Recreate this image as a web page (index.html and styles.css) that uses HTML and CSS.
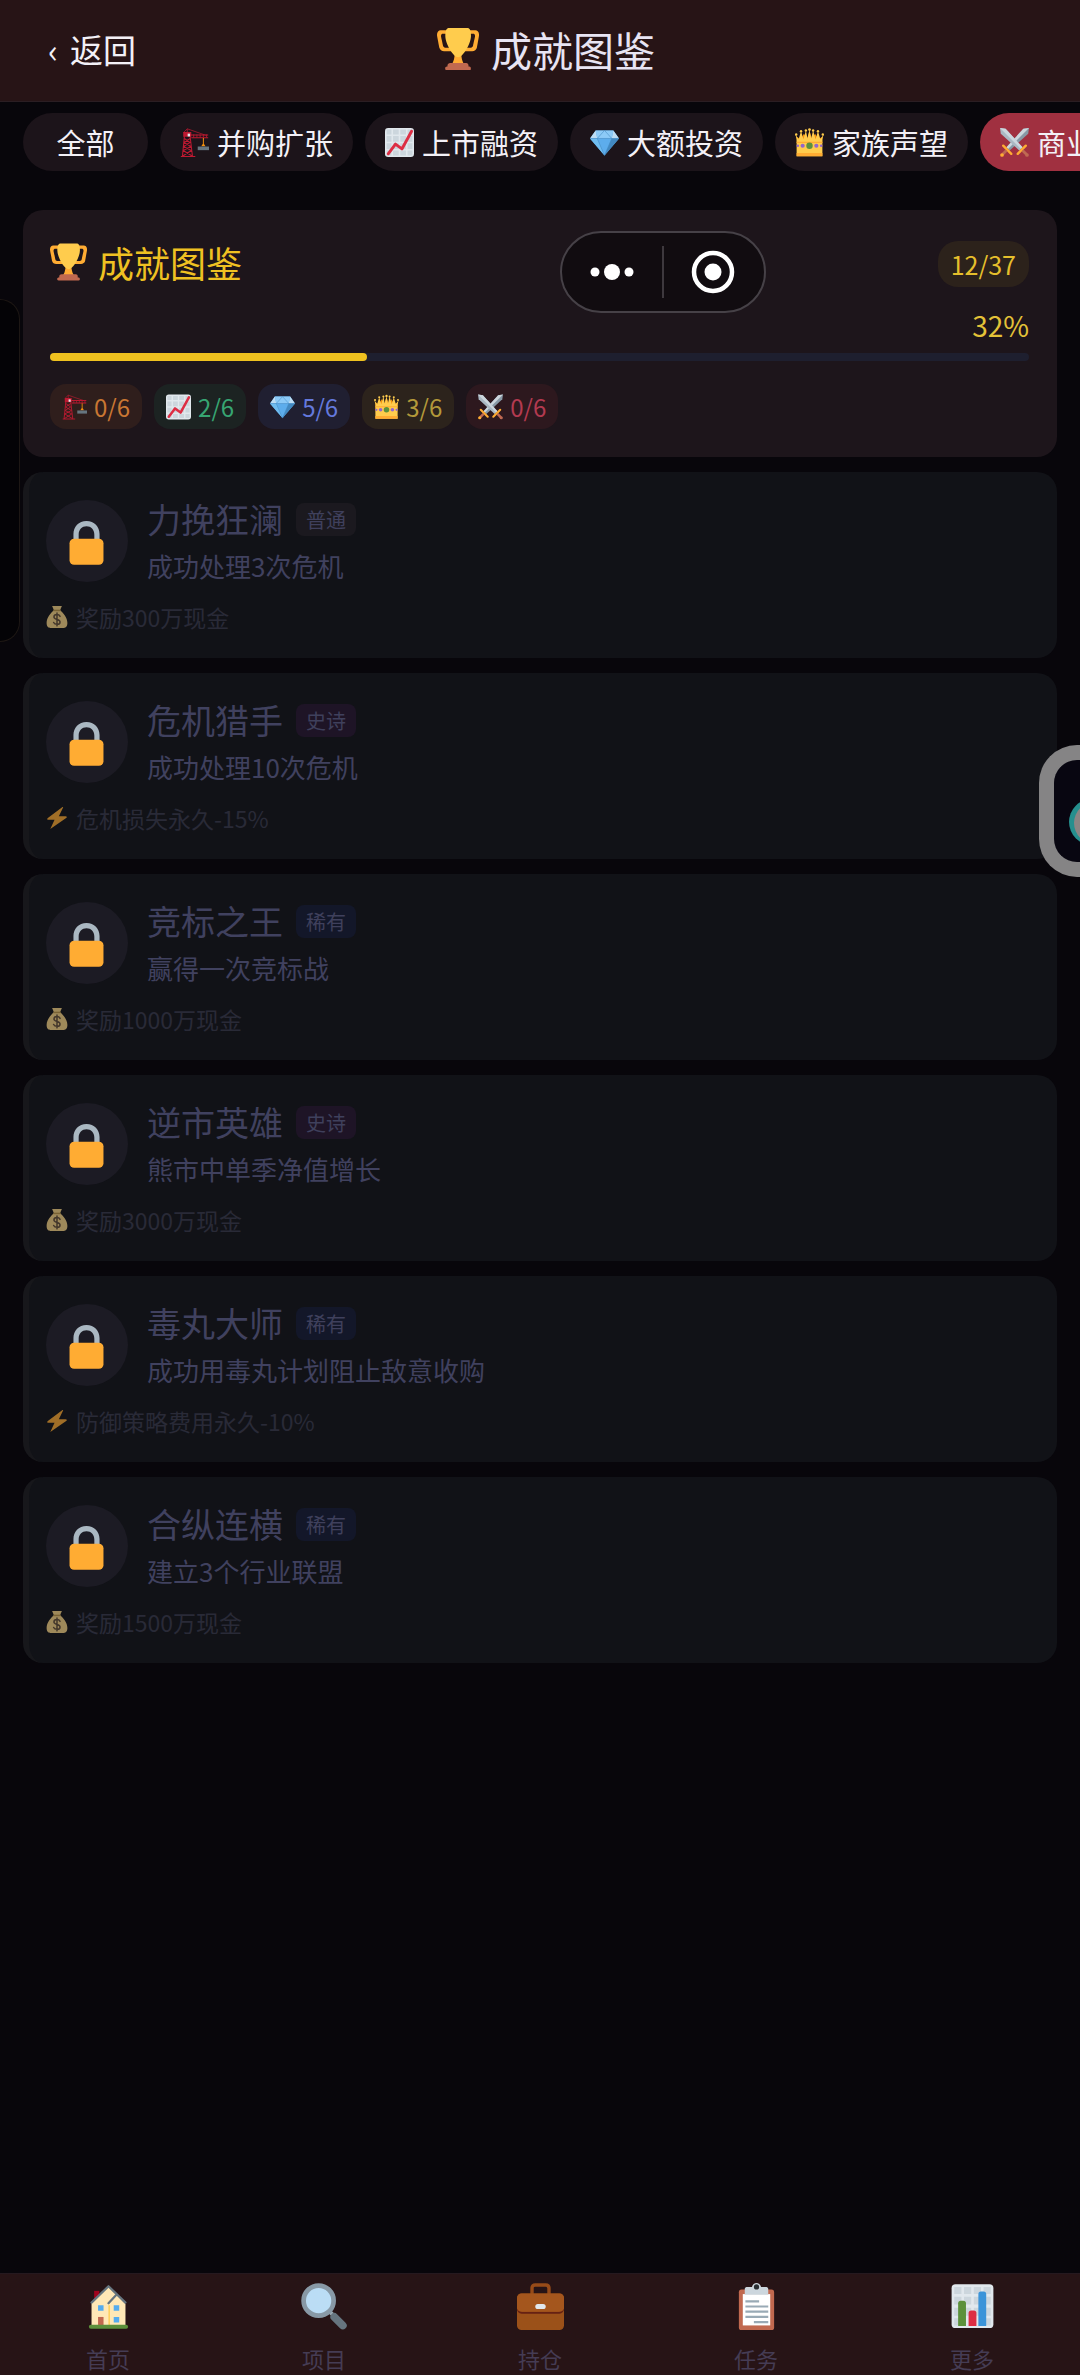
FILE: index.html
```html
<!DOCTYPE html>
<html lang="zh-CN">
<head>
<meta charset="utf-8">
<meta name="viewport" content="width=device-width, initial-scale=1">
<title>成就图鉴</title>
<link rel="stylesheet" href="styles.css">
</head>
<body>
<svg class="sprite" aria-hidden="true">
  <symbol id="trophy" viewBox="0 0 36 36">
    <path fill="#FFAC33" d="M5.123 5h6C12.227 5 13 4.896 13 6V4c0-1.104-.773-2-1.877-2h-8c-2 0-3.583 2.125-3 5 0 0 1.791 9.375 1.917 9.958C2.373 18.5 4.164 20 6.081 20h6.958c1.105 0-.039-1.896-.039-3v-2c0 1.104-.773 2-1.877 2h-4c-1.104 0-1.833-1.042-2-2S3.539 7.667 3.539 7.667C3.206 5.75 4.018 5 5.123 5zm25.812 0h-6C23.831 5 22 4.896 22 6V4c0-1.104 1.831-2 2.935-2h8c2 0 3.584 2.125 3 5 0 0-1.633 9.419-1.771 10-.354 1.5-2.042 3-4 3h-7.146C21.914 20 22 18.104 22 17v-2c0 1.104 1.831 2 2.935 2h4c1.104 0 1.834-1.042 2-2s1.584-7.333 1.584-7.333C32.851 5.75 32.04 5 30.935 5zM20.832 22c0-6.958-2.709 0-2.709 0s-3-6.958-3 0-3.291 10-3.291 10h12.292s-3.292-3.042-3.292-10z"/>
    <path fill="#FFCC4D" d="M29.123 6.577c0 6.775-6.77 18.423-11 18.423s-11-11.649-11-18.423C7.123.875 9.054 0 10.123 0h16c1.25 0 3 .875 3 6.577z"/>
    <path fill="#C1694F" d="M27 33c0 1.104.227 2-.877 2h-16C9.018 35 9 34.104 9 33v-1c0-1.104 1.164-2 2.206-2h13.917c1.042 0 1.877.896 1.877 2zM29 34.625c0 .76.165 1.375-1.252 1.375H8.498C7.206 36 7 35.385 7 34.625v-.25C7 33.615 7.738 33 8.498 33h19.25c.759 0 1.252.615 1.252 1.375z"/>
  </symbol>
  <symbol id="crane" viewBox="0 0 36 36">
    <path fill="none" stroke="#BE1931" stroke-width="1.3" d="M5.500 10L3 35M12.500 10l3 25M5.500 13l7 5-8 5 9.500 5-11 7M12.500 13l-7.500 5 8.500 5-9.500 5 11.500 7M1 35.300h18"/>
    <path fill="none" stroke="#BE1931" stroke-width=".9" d="M4 6l5-5 23 8M9 1v5"/>
    <path fill="#BE1931" d="M4 5h10v6H4zM14 8h21v1.200H14zM14 11.500h21v1.300H14z"/>
    <path stroke="#BE1931" stroke-width="1" d="M17 8v4M21 8v4M25 8v4M29 8v4M33 8v4"/>
    <path fill="#E1E8ED" d="M9.500 7h3v3.500h-3z"/>
    <path fill="#F4900C" d="M28.400 12.500h1.200v7l2 3h-5.200l2-3z"/>
    <path fill="#66757F" d="M22 23h14v4.500H22z"/>
  </symbol>
  <symbol id="rising" viewBox="0 0 36 36">
    <rect width="36" height="36" rx="4" fill="#E1E8ED"/>
    <path fill="#CCD6DD" d="M2 2h6v6H2zM10 2h7v6h-7zM19 2h7v6h-7zM28 2h6v6h-6zM2 10h6v7H2zM10 10h7v7h-7zM19 10h7v7h-7zM28 10h6v7h-6zM2 19h6v7H2zM10 19h7v7h-7zM19 19h7v7h-7zM28 19h6v7h-6zM2 28h6v6H2zM10 28h7v6h-7zM19 28h7v6h-7zM28 28h6v6h-6z"/>
    <path fill="none" stroke="#DD2E44" stroke-width="3.600" stroke-linecap="round" stroke-linejoin="round" d="M4 32l9-12 8 6L33 4"/>
  </symbol>
  <symbol id="gem" viewBox="0 0 36 36">
    <path fill="#5DADEC" d="M0 13L7 3h22l7 10-18 21z"/>
    <path fill="#BDDDF4" d="M7 3L0 13h9zM29 3l7 10h-9z"/>
    <path fill="#8CCAF7" d="M7 3h22l-2 10H9z"/>
    <path fill="#6FBCF0" d="M0 13h9l9 21z"/>
    <path fill="#4289C1" d="M36 13h-9l-9 21z"/>
    <path fill="none" stroke="#4289C1" stroke-width=".7" d="M0 13h36M9 13L18 3l9 10M9 13l9 21 9-21"/>
  </symbol>
  <symbol id="crown" viewBox="0 0 36 36">
    <path fill="#F4900C" d="M3 30h30l1-19-5 3-4-7-4 6-3-9-3 9-4-6-4 7-5-3z"/>
    <path fill="#FFCC4D" d="M2 35h32V14l1.500-6-4 6-3-10-3 10-3-11-2.500 10L18 2l-2.500 11L13.500 3l-3 11-3-10-3 10-4-6L2 14z"/>
    <path fill="#FFAC33" d="M2 31h32v4H2zM2 17h32v1.500H2z"/>
    <g fill="#FFCC4D"><circle cx="1.500" cy="8" r="1.500"/><circle cx="7.500" cy="4" r="1.500"/><circle cx="13.500" cy="3" r="1.500"/><circle cx="18" cy="2" r="1.700"/><circle cx="22.500" cy="3" r="1.500"/><circle cx="28.500" cy="4" r="1.500"/><circle cx="34.500" cy="8" r="1.500"/></g>
    <circle cx="18" cy="22" r="4" fill="#5C913B"/>
    <g fill="#9266CC"><circle cx="9.500" cy="22" r="2.600"/><circle cx="26.500" cy="22" r="2.600"/><circle cx="3.500" cy="22" r="1.600"/><circle cx="32.500" cy="22" r="1.600"/></g>
  </symbol>
  <symbol id="swords" viewBox="0 0 36 36">
    <path fill="#8899A6" d="M36 0l-1 7-23 21-4-4L29 1z"/>
    <path fill="#CCD6DD" d="M36 0L10 26l-2-2L29 1z"/>
    <path fill="#AAB8C2" d="M0 0l1 7 23 21 4-4L7 1z"/>
    <path fill="#CCD6DD" d="M0 0l26 26 2-2L7 1z"/>
    <path fill="none" stroke="#FFAC33" stroke-width="3" stroke-linecap="round" d="M4 22l10 10M32 22L22 32"/>
    <path stroke="#BF6952" stroke-width="3.500" d="M8 28l-5 5M28 28l5 5"/>
    <circle cx="2.500" cy="33.500" r="2.300" fill="#FFAC33"/><circle cx="33.500" cy="33.500" r="2.300" fill="#BF6952"/>
  </symbol>
  <symbol id="lock" viewBox="0 0 36 36">
    <path fill="#AAB8C2" d="M18 0C12 0 8 4.500 8 10v10h4V10.500C12 6.500 14.600 4 18 4s6 2.500 6 6.500V20h4V10c0-5.500-4-10-10-10z"/>
    <rect x="5" y="13.500" width="26" height="20" rx="3.500" fill="#FFAC33"/>
  </symbol>
  <symbol id="bag" viewBox="0 0 36 36">
    <path fill="#FDD888" d="M10 0h16l-3 7c5 4 12 12 12 21 0 6-3 8-6 8H7c-3 0-6-2-6-8C1 19 8 11 13 7z"/>
    <path fill="#BF9A4A" d="M12 6h12v2.500H12z"/>
    <path fill="none" stroke="#67523A" stroke-width="2.500" stroke-linecap="round" d="M23 17c-1-2-3-3-5-3-3 0-5 1.500-5 4 0 5 10 3 10 8 0 2.500-2 4-5 4-2.500 0-4.500-1-5.500-3M18 11.500v21"/>
  </symbol>
  <symbol id="bolt" viewBox="0 0 36 36">
    <path fill="#FFAC33" d="M27 0L3 18c-2 1.500-1 3 1 3h10L7 36l26-18c2-1.500 1-3-1-3H21l7-14c.5-1-.3-1.500-1-1z"/>
  </symbol>
  <symbol id="house" viewBox="0 0 36 36">
    <path fill="#A0041E" d="M7 6h4v8H7z"/>
    <path fill="#FFE8B6" d="M5 33V15L18 3l7 7 6 6v17z"/>
    <path fill="#FFCC4D" d="M18 17h1v16h-1z"/>
    <path fill="none" stroke="#66757F" stroke-width="1.700" stroke-linecap="round" stroke-linejoin="round" d="M5 15L18 2.500l13 12.500M18 15.500l5.500-6"/>
    <path fill="#55ACEE" d="M10 17h4.200v4.200H10zM22 17h4.200v4.200H22zM22 26h4.200v4.200H22z"/>
    <path fill="#C1694F" d="M10 26h4.200v7H10z"/>
    <rect x="3" y="32" width="30" height="3" rx="1.500" fill="#5C913B"/>
  </symbol>
  <symbol id="search" viewBox="0 0 36 36">
    <path stroke="#9AAAB4" stroke-width="3" d="M21 21l5 5"/>
    <path stroke="#66757F" stroke-width="6" stroke-linecap="round" d="M25.500 26l6.500 6.500"/>
    <circle cx="13.500" cy="13.500" r="11.500" fill="#BBDDF5" stroke="#8899A6" stroke-width="3.600"/>
  </symbol>
  <symbol id="briefcase" viewBox="0 0 36 36">
    <path fill="none" stroke="#974B18" stroke-width="2.600" d="M11.500 9V4c0-1.600.9-2.500 2.500-2.500h8c1.600 0 2.500.9 2.500 2.500v5"/>
    <rect y="8" width="36" height="28" rx="3.500" fill="#9B5119"/>
    <path fill="#662113" d="M0 20c0 2 1.500 3.500 3.500 3.500h29c2 0 3.500-1.500 3.500-3.500l-4 2H4z"/>
    <rect y="8" width="36" height="14" rx="3.500" fill="#A4561D"/>
    <rect x="14" y="16" width="8" height="4" rx="2" fill="#E1E8ED"/>
  </symbol>
  <symbol id="clipboard" viewBox="0 0 36 36">
    <rect x="4.500" y="5" width="27" height="31" rx="2" fill="#C1694F"/>
    <path fill="#fff" d="M7.500 8.500h21v24h-21z"/>
    <path fill="#CCD6DD" d="M9 4.500C9 3.500 10 3 11 3h3.500c1-4 6-4 7 0H25c1 0 2 .5 2 1.500V9H9z"/>
    <circle cx="18" cy="3" r="2" fill="#292F33"/>
    <path stroke="#99AAB5" stroke-width="1.700" d="M9.500 14H20M9.500 18H27M9.500 22H27M9.500 26H27M16 30h11"/>
  </symbol>
  <symbol id="bars" viewBox="0 0 36 36">
    <rect x="2" y="1" width="32" height="33.500" rx="3" fill="#E1E8ED"/>
    <path fill="#CCD6DD" d="M4 3h5.500v5.500H4zM11.500 3h5.500v5.500h-5.500zM19 3h5.500v5.500H19zM26.500 3H32v5.500h-5.500zM4 10.500h5.500v6H4zM11.500 10.500h5.500v6h-5.500zM19 10.500h5.500v6H19zM26.500 10.500H32v6h-5.500zM4 19h5.500v6H4zM11.500 19h5.500v6h-5.500zM19 19h5.500v6H19zM26.500 19H32v6h-5.500zM4 27h5.500v5.500H4zM26.500 27H32v5.500h-5.500z"/>
    <path fill="#5C913B" d="M7 15.500a2 2 0 0 1 2-2h2a2 2 0 0 1 2 2V33H7z"/>
    <path fill="#DD2E44" d="M15 23a2 2 0 0 1 2-2h2a2 2 0 0 1 2 2v10h-6z"/>
    <path fill="#3B94D9" d="M22.500 8.500a2 2 0 0 1 2-2h2a2 2 0 0 1 2 2V33h-6z"/>
  </symbol>
</svg>

<header class="header">
  <button class="back" type="button"><span>‹</span><span>返回</span></button>
  <h1 class="page-title"><svg class="icon"><use href="#trophy"/></svg>成就图鉴</h1>
</header>

<nav class="tabs" aria-label="成就分类">
  <button class="tab" type="button">全部</button>
  <button class="tab" type="button"><svg class="icon"><use href="#crane"/></svg>并购扩张</button>
  <button class="tab" type="button"><svg class="icon"><use href="#rising"/></svg>上市融资</button>
  <button class="tab" type="button"><svg class="icon"><use href="#gem"/></svg>大额投资</button>
  <button class="tab" type="button"><svg class="icon"><use href="#crown"/></svg>家族声望</button>
  <button class="tab tab-active" type="button"><svg class="icon"><use href="#swords"/></svg>商业</button>
</nav>

<main class="content">
  <section class="summary">
    <div class="summary-head">
      <h2 class="summary-title"><svg class="icon"><use href="#trophy"/></svg>成就图鉴</h2>
      <span class="count">12/37</span>
    </div>
    <div class="percent">32%</div>
    <div class="track" role="progressbar" aria-label="成就进度" aria-valuenow="32" aria-valuemin="0" aria-valuemax="100"><div class="fill" style="width:32.4%"></div></div>
    <div class="chips">
      <span class="chip chip-orange"><svg class="icon"><use href="#crane"/></svg>0/6</span>
      <span class="chip chip-green"><svg class="icon"><use href="#rising"/></svg>2/6</span>
      <span class="chip chip-blue"><svg class="icon"><use href="#gem"/></svg>5/6</span>
      <span class="chip chip-gold"><svg class="icon"><use href="#crown"/></svg>3/6</span>
      <span class="chip chip-red"><svg class="icon"><use href="#swords"/></svg>0/6</span>
    </div>
  </section>

  <article class="card">
    <div class="card-main">
      <div class="avatar"><svg class="icon"><use href="#lock"/></svg></div>
      <div class="info">
        <div class="name-row"><h3 class="name">力挽狂澜</h3><span class="rarity common">普通</span></div>
        <p class="desc">成功处理3次危机</p>
      </div>
    </div>
    <p class="reward"><svg class="icon"><use href="#bag"/></svg>奖励300万现金</p>
  </article>

  <article class="card">
    <div class="card-main">
      <div class="avatar"><svg class="icon"><use href="#lock"/></svg></div>
      <div class="info">
        <div class="name-row"><h3 class="name">危机猎手</h3><span class="rarity epic">史诗</span></div>
        <p class="desc">成功处理10次危机</p>
      </div>
    </div>
    <p class="reward"><svg class="icon"><use href="#bolt"/></svg>危机损失永久-15%</p>
  </article>

  <article class="card">
    <div class="card-main">
      <div class="avatar"><svg class="icon"><use href="#lock"/></svg></div>
      <div class="info">
        <div class="name-row"><h3 class="name">竞标之王</h3><span class="rarity rare">稀有</span></div>
        <p class="desc">赢得一次竞标战</p>
      </div>
    </div>
    <p class="reward"><svg class="icon"><use href="#bag"/></svg>奖励1000万现金</p>
  </article>

  <article class="card">
    <div class="card-main">
      <div class="avatar"><svg class="icon"><use href="#lock"/></svg></div>
      <div class="info">
        <div class="name-row"><h3 class="name">逆市英雄</h3><span class="rarity epic">史诗</span></div>
        <p class="desc">熊市中单季净值增长</p>
      </div>
    </div>
    <p class="reward"><svg class="icon"><use href="#bag"/></svg>奖励3000万现金</p>
  </article>

  <article class="card">
    <div class="card-main">
      <div class="avatar"><svg class="icon"><use href="#lock"/></svg></div>
      <div class="info">
        <div class="name-row"><h3 class="name">毒丸大师</h3><span class="rarity rare">稀有</span></div>
        <p class="desc">成功用毒丸计划阻止敌意收购</p>
      </div>
    </div>
    <p class="reward"><svg class="icon"><use href="#bolt"/></svg>防御策略费用永久-10%</p>
  </article>

  <article class="card">
    <div class="card-main">
      <div class="avatar"><svg class="icon"><use href="#lock"/></svg></div>
      <div class="info">
        <div class="name-row"><h3 class="name">合纵连横</h3><span class="rarity rare">稀有</span></div>
        <p class="desc">建立3个行业联盟</p>
      </div>
    </div>
    <p class="reward"><svg class="icon"><use href="#bag"/></svg>奖励1500万现金</p>
  </article>
</main>

<nav class="bottom-nav" aria-label="主导航">
  <a class="nav-item" href="#home"><svg class="icon"><use href="#house"/></svg>首页</a>
  <a class="nav-item" href="#projects"><svg class="icon"><use href="#search"/></svg>项目</a>
  <a class="nav-item" href="#positions"><svg class="icon"><use href="#briefcase"/></svg>持仓</a>
  <a class="nav-item" href="#tasks"><svg class="icon"><use href="#clipboard"/></svg>任务</a>
  <a class="nav-item" href="#more"><svg class="icon"><use href="#bars"/></svg>更多</a>
</nav>

<div class="capsule">
  <button class="capsule-button" type="button" aria-label="更多操作"><svg width="44" height="44" viewBox="0 0 44 44" fill="#fff"><circle cx="5" cy="22" r="4.500"/><circle cx="22" cy="22" r="8"/><circle cx="39" cy="22" r="4.500"/></svg></button>
  <button class="capsule-button" type="button" aria-label="关闭"><svg width="44" height="44" viewBox="0 0 44 44"><circle cx="22" cy="22" r="19" fill="none" stroke="#fff" stroke-width="4.500"/><circle cx="22" cy="22" r="8.500" fill="#fff"/></svg></button>
</div>
<div class="side-panel"></div>
<div class="assistant"><svg width="26" height="102" viewBox="0 0 26 102"><circle cx="38" cy="62" r="23" fill="#258f8e"/><circle cx="41" cy="63" r="21" fill="#8b8584"/></svg></div>
</body>
</html>
```

FILE: styles.css
```css
* {
  box-sizing: border-box;
}

body {
  position: relative;
  display: flex;
  flex-direction: column;
  min-height: 100vh;
  margin: 0;
  overflow-x: hidden;
  background: #08060b;
  color: #f3f0f6;
  font-family: "Noto Sans CJK SC", "Noto Sans", sans-serif;
}

h1, h2, h3, p {
  margin: 0;
  font-weight: 400;
}

button {
  padding: 0;
  border: 0;
  background: none;
  color: inherit;
  font: inherit;
}

.sprite {
  position: absolute;
  width: 0;
  height: 0;
}

.icon {
  display: block;
  flex: none;
}

.header {
  display: grid;
  grid-template-columns: 1fr auto 1fr;
  align-items: center;
  height: 102px;
  padding: 0 36px 4px 48px;
  border-bottom: 1px solid #2b1e23;
  background: #271416;
}

.back {
  display: flex;
  justify-self: start;
  gap: 12px;
  font-size: 33px;
  line-height: 48px;
}

.page-title {
  display: flex;
  align-items: center;
  gap: 12px;
  color: #e8e4f3;
  font-size: 41px;
  line-height: 60px;
}

.page-title .icon {
  width: 42px;
  height: 42px;
}

.tabs {
  display: flex;
  gap: 12px;
  padding: 11px 23px 39px;
  overflow: hidden;
}

.tab {
  display: flex;
  flex: none;
  align-items: center;
  justify-content: center;
  gap: 8px;
  min-width: 125px;
  height: 58px;
  padding: 0 20px;
  border-radius: 29px;
  background: #1c141a;
  font-size: 29px;
  line-height: 56px;
}

.tab .icon {
  width: 29px;
  height: 29px;
}

.tab-active {
  background: #a03040;
}

.content {
  display: flex;
  flex-direction: column;
  gap: 15px;
  padding: 0 23px;
}

.summary {
  padding: 31px 28px 28px 27px;
  border-radius: 20px;
  background: #1d151b;
}

.summary-head {
  display: flex;
  align-items: flex-start;
  justify-content: space-between;
}

.summary-title {
  display: flex;
  align-items: center;
  gap: 11px;
  color: #efc122;
  font-size: 36px;
  line-height: 42px;
}

.summary-title .icon {
  width: 37px;
  height: 38px;
}

.count {
  padding: 0 13px;
  border-radius: 20px;
  background: #2c221b;
  color: #e5bf2c;
  font-size: 25px;
  line-height: 46px;
}

.percent {
  margin: 18px 0 8px;
  color: #e3c238;
  font-size: 28px;
  line-height: 40px;
  text-align: right;
}

.track {
  height: 8px;
  border-radius: 4px;
  background: #1e1f2f;
}

.fill {
  height: 100%;
  border-radius: 4px;
  background: #efc11f;
}

.chips {
  display: flex;
  gap: 12px;
  margin-top: 23px;
}

.chip {
  display: flex;
  align-items: center;
  gap: 7px;
  padding: 0 12px;
  border-radius: 16px;
  font-size: 24px;
  line-height: 45px;
}

.chip .icon {
  width: 25px;
  height: 26px;
}

.chip-orange { background: #2f1e1c; color: #c97733; }
.chip-green { background: #1c2322; color: #37a572; }
.chip-blue { background: #201f31; color: #6479dc; }
.chip-gold { background: #2c231c; color: #b3993a; }
.chip-red { background: #2d181e; color: #b33a50; }

.card {
  padding: 28px 17px 23px;
  border-left: 6px solid #17171b;
  border-radius: 20px;
  background: #111217;
}

.card-main {
  display: flex;
  gap: 19px;
}

.avatar {
  display: flex;
  flex: none;
  align-items: center;
  justify-content: center;
  width: 82px;
  height: 82px;
  padding: 6px 2px 0 0;
  border-radius: 50%;
  background: #1c1b24;
}

.avatar .icon {
  width: 47px;
  height: 47px;
}

.name-row {
  display: flex;
  align-items: center;
  gap: 13px;
}

.name {
  color: #40415f;
  font-size: 34px;
  line-height: 38px;
}

.rarity {
  padding: 0 10px;
  border-radius: 8px;
  color: #3f405c;
  font-size: 20px;
  line-height: 33px;
}

.common { background: #1b191f; }
.epic { background: #1e1426; }
.rare { background: #131729; }

.desc {
  margin-top: 13px;
  color: #40415f;
  font-size: 26px;
  line-height: 30px;
}

.reward {
  display: flex;
  align-items: center;
  gap: 8px;
  margin-top: 17px;
  color: #292a37;
  font-size: 23px;
  line-height: 36px;
}

.reward .icon {
  width: 22px;
  height: 24px;
  opacity: .6;
}

.bottom-nav {
  display: grid;
  grid-template-columns: repeat(5, 1fr);
  margin-top: auto;
  padding: 9px 0 2px;
  border-top: 1px solid #25191f;
  background: #271416;
}

.nav-item {
  display: flex;
  flex-direction: column;
  align-items: center;
  gap: 13px;
  color: #453c54;
  font-size: 22px;
  line-height: 30px;
  text-decoration: none;
}

.nav-item .icon {
  width: 47px;
  height: 47px;
}

/* Host-app controls that float over the page */
.capsule {
  position: absolute;
  top: 231px;
  right: 314px;
  display: grid;
  grid-template-columns: 1fr 1fr;
  width: 206px;
  height: 82px;
  padding: 13px 2px 13px 0;
  border: 2px solid #464147;
  border-radius: 41px;
  background: #110c10;
}

.capsule-button {
  display: flex;
  align-items: center;
  justify-content: center;
}

.capsule-button + .capsule-button {
  border-left: 2px solid #3e393e;
}

.side-panel {
  position: absolute;
  top: 299px;
  left: 0;
  width: 20px;
  height: 343px;
  border: 1px solid #1d1714;
  border-left: 0;
  border-radius: 0 20px 20px 0;
  background: #040306;
}

.assistant {
  position: absolute;
  top: 745px;
  right: 0;
  width: 41px;
  height: 132px;
  overflow: hidden;
  border: 15px solid #858485;
  border-right: 0;
  border-radius: 38px 0 0 38px;
  background: #080611;
}

.assistant svg {
  display: block;
}
```
